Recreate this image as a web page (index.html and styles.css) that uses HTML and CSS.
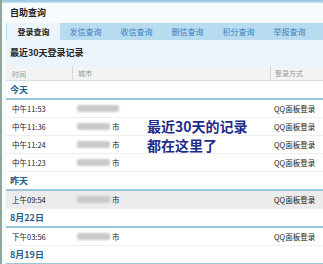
FILE: index.html
```html
<!DOCTYPE html>
<html lang="zh">
<head>
<meta charset="utf-8">
<link rel="stylesheet" href="styles.css">
</head>
<body>
<div class="page">
  <div class="topbar"></div>
  <div class="main">
    <div class="title">自助查询</div>
    <div class="tabs">
      <div class="tab active">登录查询</div>
      <div class="tab">发信查询</div>
      <div class="tab">收信查询</div>
      <div class="tab">删信查询</div>
      <div class="tab">积分查询</div>
      <div class="tab">举报查询</div>
    </div>
    <div class="panel">
      <div class="subtitle">最近30天登录记录</div>
      <div class="row head">
        <div class="c1">时间</div>
        <div class="c2">城市</div>
        <div class="c3">登录方式</div>
      </div>
      <div class="group">今天</div>
      <div class="row">
        <div class="c1">中午11:53</div>
        <div class="c2"><span class="blur wide"></span></div>
        <div class="c3">QQ面板登录</div>
      </div>
      <div class="row">
        <div class="c1">中午11:36</div>
        <div class="c2"><span class="blur"></span>市</div>
        <div class="c3">QQ面板登录</div>
      </div>
      <div class="row">
        <div class="c1">中午11:24</div>
        <div class="c2"><span class="blur"></span>市</div>
        <div class="c3">QQ面板登录</div>
      </div>
      <div class="row">
        <div class="c1">中午11:23</div>
        <div class="c2"><span class="blur"></span>市</div>
        <div class="c3">QQ面板登录</div>
      </div>
      <div class="group">昨天</div>
      <div class="row hover">
        <div class="c1">上午09:54</div>
        <div class="c2"><span class="blur"></span>市</div>
        <div class="c3">QQ面板登录</div>
      </div>
      <div class="group">8月22日</div>
      <div class="row">
        <div class="c1">下午03:56</div>
        <div class="c2"><span class="blur"></span>市</div>
        <div class="c3">QQ面板登录</div>
      </div>
      <div class="group">8月19日</div>
    </div>
  </div>
  <div class="note">
    <div class="note-line">最近30天的记录</div>
    <div class="note-line">都在这里了</div>
  </div>
</div>
</body>
</html>
```

FILE: styles.css
```css
html, body {
  margin: 0;
  padding: 0;
  background: #ffffff;
  overflow: hidden;
}
body {
  font-family: "Noto Sans CJK SC", "Liberation Sans", sans-serif;
  color: #333;
}
.page {
  position: relative;
  width: 323px;
  height: 264px;
  overflow: hidden;
  border-left: 2px solid #8fa89a;
  box-sizing: border-box;
  background: #f7fbfd;
}
.topbar {
  height: 3px;
  background: linear-gradient(#8fc2df, #c9e3f2);
}
.main {
  margin-left: 4px;
}
.title {
  height: 20px;
  line-height: 20px;
  padding-left: 4px;
  font-size: 9px;
  font-weight: bold;
  color: #222;
}
.tabs {
  display: flex;
  height: 17px;
  background: #b7dbef;
  padding-left: 1px;
}
.tab {
  width: 51px;
  text-align: center;
  line-height: 17px;
  font-size: 8px;
  color: #3b80c2;
}
.tab.active {
  width: 53px;
  background: #eaf4fa;
  color: #222;
  font-weight: bold;
}
.panel {
  background: #eaf4fa;
}
.subtitle {
  height: 26px;
  line-height: 26px;
  padding-left: 4px;
  font-size: 9px;
  font-weight: bold;
  color: #222;
}
.row {
  display: grid;
  grid-template-columns: 66px 198px 1fr;
  height: 18px;
  align-items: center;
  background: #ffffff;
  border-bottom: 1px solid #efefef;
  box-sizing: border-box;
  font-size: 7.5px;
  color: #222;
}
.row.hover {
  background: #ebebeb;
}
.row.head {
  height: 15px;
  background: #f1f3f4;
  border-bottom: 1px solid #d8dfe3;
  color: #999;
  font-size: 7px;
}
.row.head .c2, .row.head .c3 {
  border-left: 1px solid #d2d6d8;
  height: 15px;
  line-height: 15px;
}
.c1 {
  padding-left: 6px;
}
.c2 {
  padding-left: 5px;
  display: flex;
  align-items: center;
}
.c3 {
  padding-left: 4px;
}
.blur {
  display: inline-block;
  width: 33px;
  height: 7px;
  background: #c9c9c9;
  border-radius: 2px;
  filter: blur(0.8px);
  margin-right: 2px;
}
.blur.wide {
  width: 42px;
}
.group {
  height: 19px;
  line-height: 17px;
  padding-left: 4px;
  background: #ffffff;
  border-bottom: 2px solid #9ac6da;
  box-sizing: border-box;
  font-size: 9px;
  color: #23608c;
  font-weight: bold;
}
.note {
  position: absolute;
  left: 145px;
  top: 117px;
  font-size: 14px;
  font-weight: bold;
  color: #1f2b8a;
}
.note-line {
  height: 19px;
  line-height: 19px;
}
```
